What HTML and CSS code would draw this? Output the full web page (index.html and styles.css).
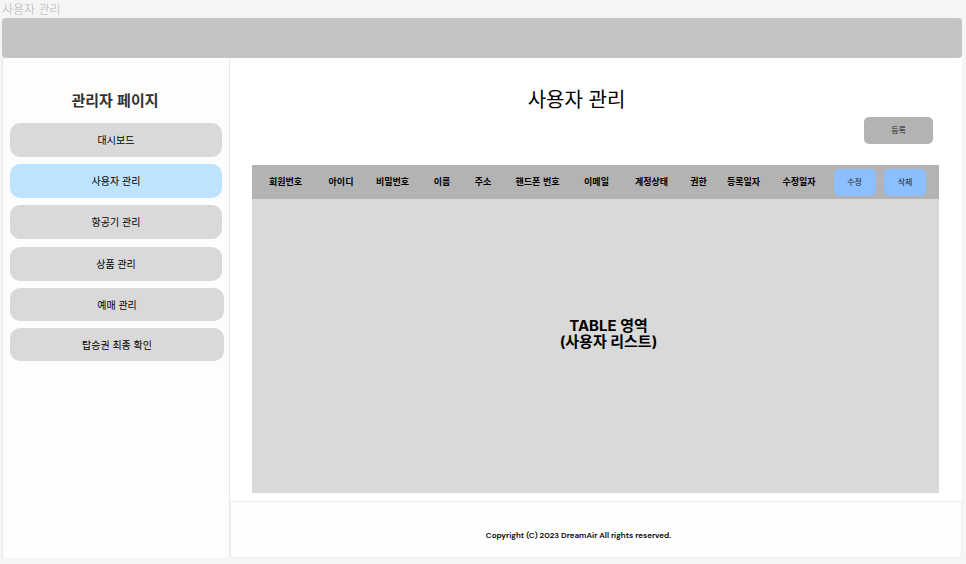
FILE: index.html
```html
<!DOCTYPE html>
<html lang="ko">
<head>
<meta charset="utf-8">
<meta name="viewport" content="width=device-width, initial-scale=1">
<title>사용자 관리</title>
<link rel="stylesheet" href="styles.css">
</head>
<body>
<p class="frame-label">사용자 관리</p>
<div class="frame">
  <header class="topbar"></header>
  <div class="columns">
    <aside class="sidebar">
      <h2 class="sidebar-title">관리자 페이지</h2>
      <nav class="menu">
        <a class="menu-item" href="#">대시보드</a>
        <a class="menu-item active" href="#" aria-current="page">사용자 관리</a>
        <a class="menu-item" href="#">항공기 관리</a>
        <a class="menu-item" href="#">상품 관리</a>
        <a class="menu-item wide" href="#">예매 관리</a>
        <a class="menu-item wide" href="#">탑승권 최종 확인</a>
      </nav>
    </aside>
    <div class="content">
      <main class="main">
        <h1 class="page-title">사용자 관리</h1>
        <div class="actions"><button class="btn register" type="button">등록</button></div>
        <table class="users">
          <colgroup>
            <col class="c-number"><col class="c-id"><col class="c-password"><col class="c-name"><col class="c-address"><col class="c-phone"><col class="c-email"><col class="c-status"><col class="c-role"><col class="c-created"><col class="c-updated"><col class="c-edit"><col class="c-delete">
          </colgroup>
          <thead>
            <tr>
              <th>회원번호</th><th>아이디</th><th>비밀번호</th><th>이름</th><th>주소</th><th>핸드폰 번호</th><th>이메일</th><th>계정상태</th><th>권한</th><th>등록일자</th><th>수정일자</th>
              <th class="action"><button class="btn row-btn" type="button">수정</button></th>
              <th class="action last"><button class="btn row-btn" type="button">삭제</button></th>
            </tr>
          </thead>
          <tbody>
            <tr><td class="placeholder" colspan="13">TABLE 영역<br>(사용자 리스트)</td></tr>
          </tbody>
        </table>
      </main>
      <footer class="footer">Copyright (C) 2023 DreamAir All rights reserved.</footer>
    </div>
  </div>
</div>
</body>
</html>
```
FILE: styles.css
```css
* {
  box-sizing: border-box;
}

body {
  margin: 0;
  background: #f5f5f5;
  color: #000;
  font-family: "Noto Sans CJK KR", sans-serif;
}

.frame-label {
  margin: 0;
  padding-left: 2px;
  color: #b3b3b3;
  font-size: 12px;
  font-weight: 300;
  line-height: 18px;
}

.frame {
  margin: 0 4px 6px 2px;
}

.topbar {
  height: 40px;
  border-radius: 4px;
  background: #c4c4c4;
}

.columns {
  display: flex;
  background: #fff;
}

.sidebar {
  flex: 0 0 228px;
  padding: 28px 5px 0 7px;
  border: solid #e8e8e8;
  border-width: 0 1px;
  background: #fffdfb;
}

.sidebar-title {
  margin: 0 0 9px;
  padding-right: 4px;
  color: #333;
  font-size: 15px;
  font-weight: 700;
  line-height: 28px;
  text-align: center;
}

.menu {
  display: flex;
  flex-direction: column;
  justify-content: space-between;
  height: 238px;
}

.menu-item {
  margin-right: 2px;
  border-radius: 10px;
  background: #d9d9d9;
  color: #000;
  font-size: 10px;
  line-height: 34px;
  text-align: center;
  text-decoration: none;
}

.menu-item.wide {
  margin-right: 0;
  line-height: 33px;
}

.menu-item.active {
  background: #bde3ff;
}

.content {
  flex: 1;
  min-width: 0;
}

.main {
  padding: 26px 23px 8px 22px;
}

.page-title {
  margin: 0;
  font-size: 20px;
  font-weight: 400;
  line-height: 30px;
  text-align: center;
  padding-right: 38px;
}

.actions {
  display: flex;
  justify-content: flex-end;
  padding: 3px 6px 21px 0;
}

.btn {
  border: 0;
  border-radius: 5px;
  padding: 0 0 2px;
  color: #222;
  font-family: inherit;
  font-size: 8px;
  font-weight: 400;
}

.register {
  width: 69px;
  height: 27px;
  background: #b3b3b3;
}

.row-btn {
  display: block;
  width: 42px;
  height: 27px;
  margin: 0 auto;
  background: #8bbfff;
}

.users {
  width: 100%;
  border-collapse: collapse;
  table-layout: fixed;
}

.users th {
  height: 34px;
  padding: 0 0 2px;
  background: #b3b3b3;
  font-size: 9px;
  font-weight: 700;
  text-align: center;
  white-space: nowrap;
}

.users th.action {
  padding: 0;
}

.users th.last {
  padding-right: 11px;
}

.c-number, .c-phone { width: 67px; }
.c-id { width: 44px; }
.c-password, .c-status { width: 59px; }
.c-name { width: 40px; }
.c-address { width: 42px; }
.c-email { width: 51px; }
.c-role { width: 35px; }
.c-created, .c-edit { width: 55px; }
.c-updated { width: 56px; }
.c-delete { width: 57px; }

.placeholder {
  height: 294px;
  padding: 0 0 24px 26px;
  background: #d9d9d9;
  font-family: Inter, "Noto Sans CJK KR", sans-serif;
  font-size: 15px;
  font-weight: 700;
  line-height: 16px;
  text-align: center;
}

.footer {
  padding: 28px 35px 17px 0;
  border: 1px solid #eee;
  background: #fefefe;
  font-family: "DM Sans", Inter, sans-serif;
  font-size: 8px;
  font-weight: 600;
  line-height: 10px;
  text-align: center;
}
```
